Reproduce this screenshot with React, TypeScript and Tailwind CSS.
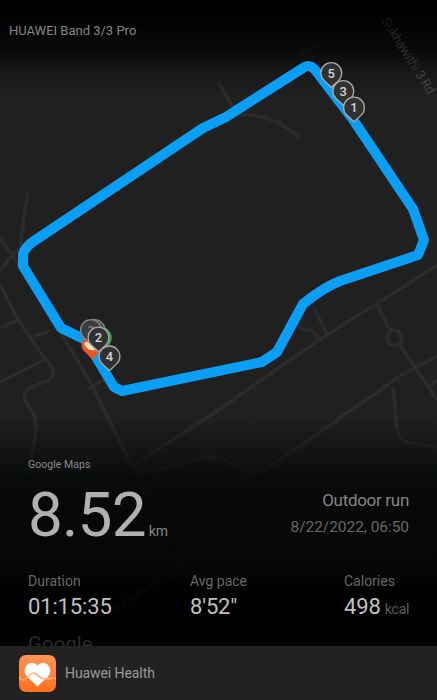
import React from "react";

const ROADS = [
  "M-4 276L12 255L0 238M12 255L50 315L88 378L130 462L190 580",
  "M10 254L20 250L24 218L28 192M0 284L17 318L40 352L51 366Q56 374 49 380L30 388Q22 393 25 400L34 415Q37 422 35 436L33 452L24 475",
  "M0 328L17 320M34 336L50 331M0 382L44 360M88 389L107 378",
  "M134 465L217 411L325 336L400 289L437 265",
  "M314 308L328 336M299 329L312 330L321 341",
  "M377 304L389 329L399 331L402 341L398 346L389 344L387 337L391 330M400 345L437 400",
  "M437 356L400 376L290 453L263 471Q255 475 248 471L222 459Q205 454 180 464L140 474",
  "M393 387L397 428Q400 443 412 443L437 447M428 387L437 380",
  "M218 82L232 106L240 114L258 116Q280 120 299 137",
  "M283 8Q325 16 356 6M356 6L376 24M300 55L322 42",
];

function Pin({ x, y, label, faded = false }: { x: number; y: number; label: string; faded?: boolean }) {
  return (
    <g transform={`translate(${x} ${y})`}>
      <path
        d="M0 14.3L-7.2 7.6A10.4 10.4 0 1 1 7.2 7.6Z"
        fill={faded ? "#3c3d3d" : "#303131"}
        stroke={faded ? "#858585" : "#a9a9a9"}
        strokeWidth="1.3"
        strokeLinejoin="round"
      />
      <text
        y="4.7"
        textAnchor="middle"
        fontSize="13"
        fontWeight="500"
        fontFamily="Roboto, sans-serif"
        fill={faded ? "#777" : "#d5d5d5"}
      >
        {label}
      </text>
    </g>
  );
}

function RouteMap() {
  return (
    <svg className="absolute inset-0" width="437" height="700" viewBox="0 0 437 700" fill="none">
      <defs>
        <linearGradient id="shade" x1="0" y1="0" x2="0" y2="700" gradientUnits="userSpaceOnUse">
          <stop offset="0" stopColor="#000" />
          <stop offset=".021" stopColor="#000" stopOpacity=".98" />
          <stop offset=".071" stopColor="#000" stopOpacity=".7" />
          <stop offset=".105" stopColor="#000" stopOpacity=".25" />
          <stop offset=".137" stopColor="#000" stopOpacity="0" />
          <stop offset=".595" stopColor="#000" stopOpacity="0" />
          <stop offset=".64" stopColor="#020706" stopOpacity=".4" />
          <stop offset=".685" stopColor="#020605" stopOpacity=".8" />
          <stop offset=".715" stopColor="#060606" stopOpacity=".93" />
          <stop offset=".82" stopColor="#040404" stopOpacity=".94" />
          <stop offset=".838" stopColor="#000" stopOpacity=".98" />
        </linearGradient>
      </defs>
      <rect width="437" height="700" fill="#202020" />
      <g stroke="#2b2b2b" strokeWidth="3.6" strokeLinejoin="round">
        {ROADS.map((d) => (
          <path key={d} d={d} />
        ))}
      </g>
      <rect width="437" height="700" fill="url(#shade)" />
      <text
        transform="translate(381 21) rotate(57.5)"
        fontSize="13"
        fontFamily="Roboto, sans-serif"
        fill="#444"
        textLength="88"
      >
        <tspan fill="#181818">Su</tspan>
        <tspan fill="#242424">kh</tspan>
        <tspan fill="#303030">awithi</tspan> 3 Rd
      </text>
      <text
        transform="translate(113 614) rotate(-32)"
        fontSize="12"
        fontFamily="Roboto, sans-serif"
        fill="#0a0b0b"
      >
        Sukhawithi 3 Rd
      </text>
      <path
        d="M92 343L61 328L23 266L23 254Q25 247 34 241L203 128L226 117L303 68Q310 63 316 71L352 118L413 209L424 240L418 255L340 281Q324 287 303 304L277 352L262 362L122 391L114 387L90 347Z"
        stroke="#0a9ff5"
        strokeWidth="10"
        strokeLinejoin="round"
      />
      <Pin x={331.3} y={73} label="5" />
      <Pin x={343.3} y={91} label="3" />
      <Pin x={354} y={107.5} label="1" />
      <path d="M93 360L83 350A10 10 0 1 1 100 350Z" fill="#e55929" />
      <path d="M84 343Q87 352 96 350L91 340Z" fill="#f5dfbd" />
      <path d="M98 353L92 346A11.5 11.5 0 1 1 108.5 346Z" fill="#3c9a46" />
      <Pin x={94.5} y={330} label="" faded />
      <Pin x={91} y={330} label="?" faded />
      <Pin x={98.5} y={337.5} label="2" />
      <Pin x={109.5} y={356.3} label="4" />
    </svg>
  );
}

function HealthIcon() {
  return (
    <svg className="h-[37px] w-[37px] shrink-0" viewBox="0 0 37 37" fill="none">
      <defs>
        <linearGradient id="tile" x1="0" y1="0" x2="0" y2="1">
          <stop stopColor="#ff9455" />
          <stop offset="1" stopColor="#ff701e" />
        </linearGradient>
      </defs>
      <rect width="37" height="37" rx="7" fill="url(#tile)" />
      <path
        d="M18.5 31.5L8 21.5C5 18.5 4.8 13.5 8 10C11.3 6.8 15.8 7.3 18.5 10.8C21.2 7.3 25.7 6.8 29 10C32.2 13.5 32 18.5 29 21.5Z"
        fill="#fff"
      />
      <path
        d="M0 22Q2 25 4 24.8C9 24.6 10 18 14.5 18C19 18 20 24 25 24C29 24 29.5 22.7 37 23.3"
        stroke="#ffb47e"
        strokeWidth="1.6"
      />
    </svg>
  );
}

function Stat({ label, value, unit }: { label: string; value: string; unit?: string }) {
  return (
    <div>
      <div className="text-[14px] leading-[18px] text-[#686868]">{label}</div>
      <div className="mt-1 text-[22px] leading-[26px] tracking-[-0.15px] text-[#c0c0c0]">
        {value}
        {unit && <span className="ml-1 text-[14px] tracking-[-0.15px] text-[#5c5c5c]">{unit}</span>}
      </div>
    </div>
  );
}

export default function App() {
  return (
    <div className="relative h-[700px] w-[437px] overflow-hidden bg-[#202020] font-['Roboto',sans-serif]">
      <RouteMap />
      <div className="relative flex h-full flex-col">
        <header className="h-[458px] pt-[22px] pl-[9px] text-[13px] leading-[17px] tracking-[0px] text-[#858585]">
          HUAWEI Band 3/3 Pro
        </header>
        <main className="flex h-[188px] flex-col px-7">
          <div className="text-[10.5px] leading-[13px] tracking-[0.05px] text-[#8a8a8a]">Google Maps</div>
          <div className="flex h-[101px] shrink-0 justify-between">
            <div className="pt-[8px] text-[62px] leading-[72px] tracking-[-0.8px] text-[#b0b0b0]">
              8.52<span className="ml-[3px] text-[14px] tracking-[0px] text-[#858585]">km</span>
            </div>
            <div className="pt-[18px] text-right">
              <div className="text-[17px] leading-[22px] tracking-[-0.3px] text-[#858585]">Outdoor run</div>
              <div className="mt-[6px] text-[15.5px] leading-5 tracking-[-0.05px] text-[#686868]">8/22/2022, 06:50</div>
            </div>
          </div>
          <div className="grid grid-cols-[162px_154px_1fr]">
            <Stat label="Duration" value="01:15:35" />
            <Stat label="Avg pace" value={"8'52\""} />
            <Stat label="Calories" value="498" unit="kcal" />
          </div>
          <div className="mt-[10px] h-3 text-[20.5px] leading-[24px] text-[#2a2a2a]">Google</div>
        </main>
        <footer className="relative flex h-[54px] items-center gap-[9px] bg-[#222222] pl-[19px] text-[14px] tracking-[-0.08px] text-[#999]">
          <HealthIcon />
          <span>Huawei Health</span>
        </footer>
      </div>
    </div>
  );
}
